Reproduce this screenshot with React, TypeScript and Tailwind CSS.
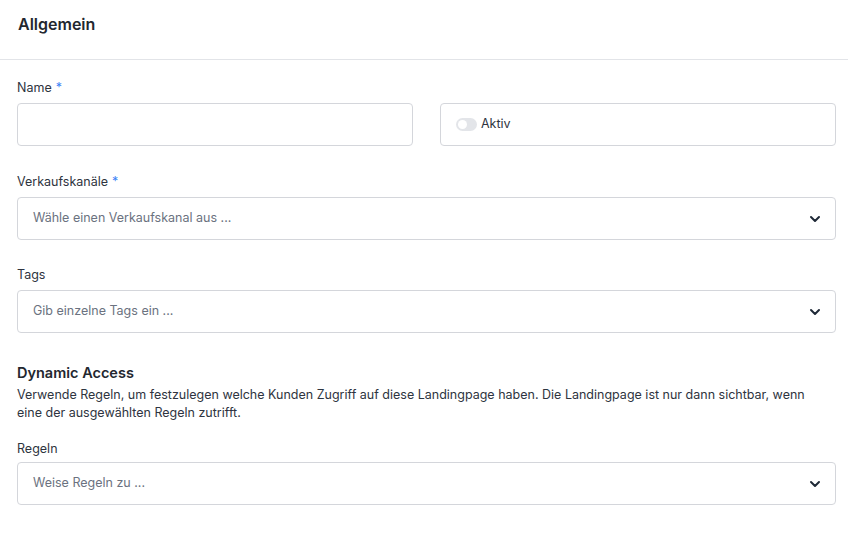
import { ChevronDown } from "lucide-react";

function Label({ text, required }: { text: string; required?: boolean }) {
  return (
    <div className="pt-px text-[12.5px] leading-[18px] text-[#2e3440]">
      {text}
      {required && <span className="ml-1 text-[#3b82f6]">*</span>}
    </div>
  );
}

function Select({ placeholder, gap = "mt-[6px]" }: { placeholder: string; gap?: string }) {
  return (
    <div
      className={`${gap} flex h-[43px] items-center justify-between rounded-[4px] border border-[#d4d6db] bg-white pl-[15px] pr-[12px]`}
    >
      <span className="text-[12.5px] text-[#6b7280]">{placeholder}</span>
      <ChevronDown className="h-4 w-4 text-[#1f2937]" strokeWidth={3} />
    </div>
  );
}

export default function App() {
  return (
    <div
      className="min-h-[549px] w-full bg-white text-[#2e3440]"
      style={{ fontFamily: "Inter, 'Noto Sans', sans-serif" }}
    >
      <div className="h-[60px] border-b border-[#e2e4e8] pl-[18px] pt-[14px]">
        <h2 className="text-[16px] font-semibold leading-[20px] text-[#23272f]">Allgemein</h2>
      </div>

      <div className="pl-[17px] pr-[12px] pt-[18px]">
        <div>
          <Label text="Name" required />
          <div className="mt-[6px] grid grid-cols-2 gap-[27px]">
            <div className="h-[43px] rounded-[4px] border border-[#d4d6db] bg-white" />
            <div className="flex h-[43px] items-center gap-[4px] rounded-[4px] border border-[#d4d6db] bg-white pl-[15px]">
              <span className="flex h-[13px] w-[21px] items-center rounded-full bg-[#e3e5e9] px-[2px]">
                <span className="h-[9px] w-[9px] rounded-full bg-white" />
              </span>
              <span className="text-[12.5px]">Aktiv</span>
            </div>
          </div>
        </div>

        <div className="mt-[26px]">
          <Label text="Verkaufskanäle" required />
          <Select placeholder="Wähle einen Verkaufskanal aus ..." />
        </div>

        <div className="mt-[25px]">
          <Label text="Tags" />
          <Select placeholder="Gib einzelne Tags ein ..." />
        </div>

        <div className="mt-[30px]">
          <h3 className="text-[14.5px] font-semibold leading-[20px] text-[#23272f]">Dynamic Access</h3>
          <p className="mt-[3px] max-w-[800px] text-[12.5px] leading-[18px] text-[#2e3440]">
            Verwende Regeln, um festzulegen welche Kunden Zugriff auf diese Landingpage haben. Die
            Landingpage ist nur dann sichtbar, wenn eine der ausgewählten Regeln zutrifft.
          </p>
        </div>

        <div className="mt-[17px]">
          <Label text="Regeln" />
          <Select placeholder="Weise Regeln zu ..." gap="mt-[4px]" />
        </div>
      </div>
    </div>
  );
}
